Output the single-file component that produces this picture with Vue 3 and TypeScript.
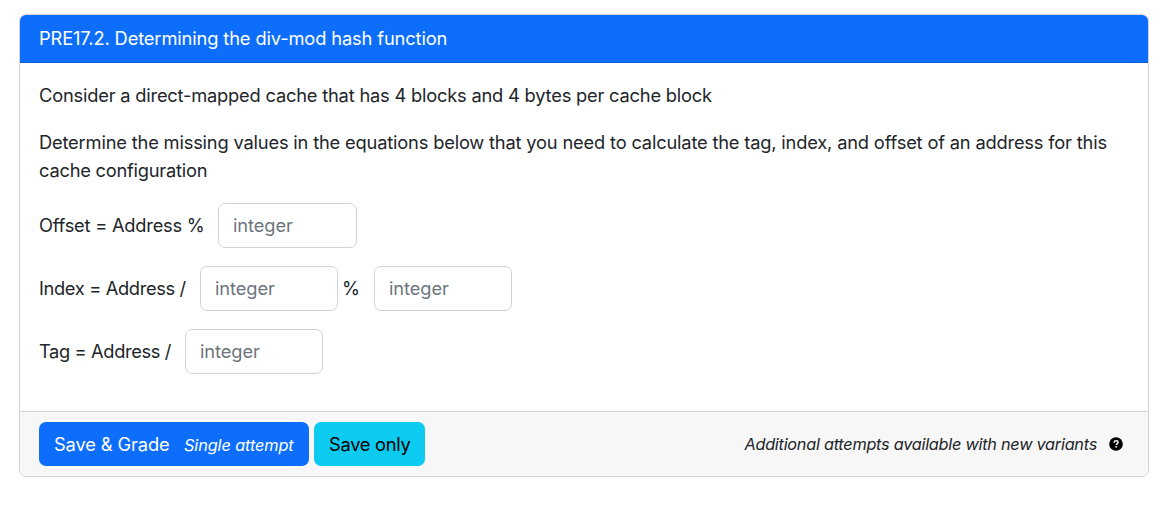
<script setup lang="ts">
interface Equation {
  name: string
  parts: string[]
}

const equations: Equation[] = [
  { name: 'offset', parts: ['Offset = Address %'] },
  { name: 'index', parts: ['Index = Address /', '%'] },
  { name: 'tag', parts: ['Tag = Address /'] },
]
</script>

<template>
  <main class="page">
    <section class="card">
      <header class="card-header">PRE17.2. Determining the div-mod hash function</header>
      <div class="card-body">
        <p class="intro">Consider a direct-mapped cache that has 4 blocks and 4 bytes per cache block</p>
        <p class="task">
          <span>Determine the missing values in the equations below that you need to calculate the tag, index, and offset of an address for this</span><br />
          <span class="task-end">cache configuration</span>
        </p>
        <div v-for="eq in equations" :key="eq.name" class="equation" :class="eq.name">
          <template v-for="(part, i) in eq.parts" :key="i">
            <label :class="i === 0 ? 'lead' : 'operator'">{{ part }}</label>
            <input type="text" placeholder="integer" :aria-label="part" />
          </template>
        </div>
      </div>
      <footer class="card-footer">
        <button class="btn primary"><span class="save">Save &amp; Grade</span><em>Single attempt</em></button>
        <button class="btn info"><span>Save only</span></button>
        <span class="note">Additional attempts available with new variants</span>
        <svg class="help" viewBox="0 0 512 512" aria-hidden="true">
          <circle cx="256" cy="256" r="250" fill="#000" />
          <path d="M184 204c4-45 31-67 75-67 45 0 73 25 73 60 0 51-70 51-70 98" fill="none" stroke="#f7f7f7" stroke-width="53" />
          <circle cx="261" cy="361" r="36" fill="#f7f7f7" />
        </svg>
      </footer>
    </section>
  </main>
</template>

<style>
body {
  background: #fff;
}
</style>

<style scoped>
* {
  box-sizing: border-box;
}
.page {
  height: 507px;
  padding: 14px 4px 0 19px;
  overflow: hidden;
  font-family: Inter, "Liberation Sans", sans-serif;
  font-size: 18.3px;
  line-height: 28px;
  color: #212529;
}
.card {
  height: 463px;
  display: flex;
  flex-direction: column;
  border: 1px solid #d3d3d4;
  border-radius: 7px;
  overflow: hidden;
  background: #fff;
}
.card-header {
  height: 48px;
  flex: none;
  padding: 9px 19px 0;
  color: #fff;
  background: #0d6efd;
  border-bottom: 1px solid #0b5ed7;
  letter-spacing: -0.13px;
  white-space: nowrap;
}
.card-body {
  flex: 1;
  padding: 18px 19px 0;
  white-space: nowrap;
}
p {
  margin: 0;
}
.intro {
  margin-bottom: 19px;
  letter-spacing: -0.2px;
}
.task {
  margin-bottom: 19px;
  letter-spacing: -0.18px;
}
.task-end {
  letter-spacing: -0.23px;
}
.equation {
  display: flex;
  align-items: center;
  height: 45px;
  margin-bottom: 18px;
}
.lead,
.operator {
  flex: none;
  padding-bottom: 1px;
}
.offset .lead {
  width: 179px;
  letter-spacing: -0.23px;
}
.index .lead {
  width: 161px;
  letter-spacing: -0.35px;
}
.tag .lead {
  width: 146px;
  letter-spacing: -0.37px;
}
.operator {
  width: 36px;
  padding-left: 4px;
}
input {
  width: 138px;
  height: 45px;
  flex: none;
  padding: 0 14px 2px;
  border: 1px solid #ced4da;
  border-radius: 7px;
  background: #fff;
  font: inherit;
  letter-spacing: -0.1px;
  outline: none;
}
.offset input {
  width: 139px;
}
input::placeholder {
  color: #6c757d;
  opacity: 1;
}
.card-footer {
  height: 65px;
  flex: none;
  display: flex;
  align-items: center;
  padding: 0 25px 0 19px;
  border-top: 1px solid #d3d3d4;
  background: #f7f7f7;
  white-space: nowrap;
}
.btn {
  height: 44px;
  padding: 8px 15px;
  display: flex;
  align-items: baseline;
  border: 0;
  border-radius: 7px;
  font: inherit;
  line-height: 28px;
}
.primary {
  width: 270px;
  margin-right: 5px;
  color: #fff;
  background: #0d6efd;
}
.save {
  width: 130px;
  flex: none;
  text-align: left;
  letter-spacing: -0.12px;
}
.primary em {
  font-size: 16.3px;
  letter-spacing: -0.1px;
}
.info {
  width: 111px;
  color: #000;
  background: #0dcaf0;
  letter-spacing: -0.27px;
}
.note {
  margin-left: auto;
  font-size: 16.3px;
  font-style: italic;
  letter-spacing: -0.26px;
}
.help {
  width: 14px;
  height: 14px;
  margin-left: 12px;
}
</style>
